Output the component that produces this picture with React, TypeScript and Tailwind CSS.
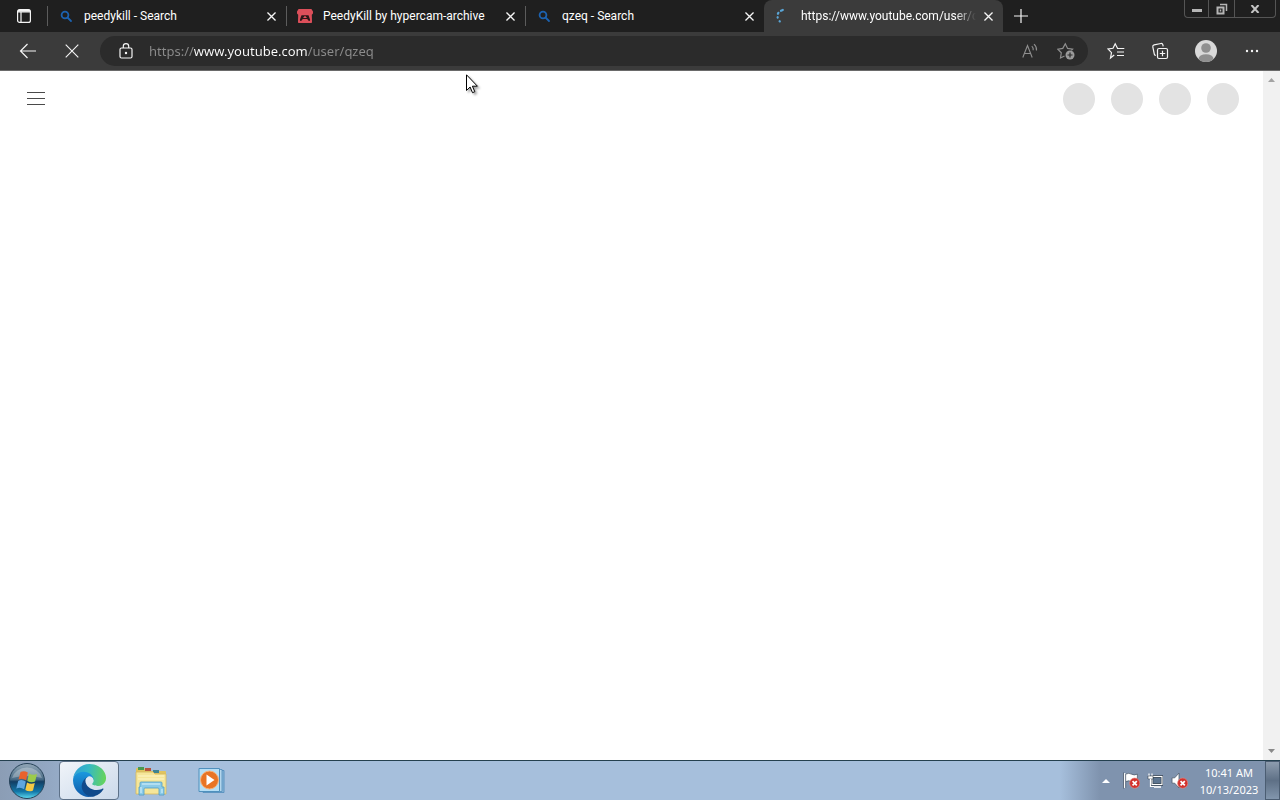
import React from 'react';

interface Tab {
  title: string;
  icon: 'search' | 'itch' | 'loading';
  active?: boolean;
}

const tabs: Tab[] = [
  { title: 'peedykill - Search', icon: 'search' },
  { title: 'PeedyKill by hypercam-archive', icon: 'itch' },
  { title: 'qzeq - Search', icon: 'search' },
  { title: 'https://www.youtube.com/user/qzeq', icon: 'loading', active: true }
];

const SearchIcon = () => (
  <svg width="14" height="14" viewBox="0 0 14 14" fill="none" stroke="#1c62b0" strokeWidth="1.8">
    <circle cx="6" cy="6" r="3.4" />
    <path d="M8.500 8.500 12 12" strokeLinecap="round" />
  </svg>
);

const ItchIcon = () => (
  <svg width="16" height="14" viewBox="0 0 16 14">
    <path
      d="M1.600 0h12.800L16 2.600v1.200c0 1-.6 1.600-1.200 1.900L15 13c0 .6-.4 1-1 1H2c-.6 0-1-.4-1-1l.2-7.300C.6 5.400 0 4.800 0 3.800V2.600z"
      fill="#dc4f5a"
    />
    <path
      d="M4.500 6.200h7l1.600 4.600c.2 1-.7 1.600-1.500.9L10.200 10H5.800l-1.400 1.700c-.8.7-1.700.1-1.500-.9z"
      fill="#2a1718"
    />
    <path d="M8 6.800 10 9H6z" fill="#dc4f5a" />
  </svg>
);

const LoadingIcon = () => (
  <svg width="16" height="16" viewBox="0 0 16 16" fill="none" stroke="#5aa5d6" strokeWidth="2.200" strokeLinecap="round">
    <path d="M7.800 2 6 2.800M3.400 4.800l-.5 1" />
    <path d="M2.600 9.200l.1.400" />
    <path d="M4.600 13.200l.2.200" />
  </svg>
);

const icons = { search: SearchIcon, itch: ItchIcon, loading: LoadingIcon };

const CloseIcon = ({ size = 9, width = 1.5 }: { size?: number; width?: number }) => (
  <svg width={size} height={size} viewBox="0 0 10 10" fill="none" stroke="#f5f5f5" strokeWidth={width}>
    <path d="M.5.5l9 9M9.500.500l-9 9" />
  </svg>
);

const BrowserTab: React.FC<{ tab: Tab }> = ({ tab }) => {
  const Icon = icons[tab.icon];

  return (
    <div
      className={`flex h-8 min-w-0 flex-1 items-center pr-[7px]
        ${tab.active ? 'rounded-t-lg bg-[#3b3b3b]' : ''}`}
    >
      <span className={`h-5 w-px shrink-0 ${tab.active ? '' : 'bg-[#5c5c5c]'}`} />
      <button
        role="tab"
        aria-selected={!!tab.active}
        className="ml-[9px] flex min-w-0 flex-1 items-center gap-[9px] text-left font-['Roboto','Noto_Sans',sans-serif] text-[12px] leading-4 text-white"
      >
        <span className="flex w-[18px] shrink-0 justify-center">
          <Icon />
        </span>
        <span
          className={`min-w-0 flex-1 overflow-hidden whitespace-nowrap
            ${tab.active ? '[mask-image:linear-gradient(to_right,#000_88%,transparent)]' : ''}`}
        >
          {tab.title}
        </span>
      </button>
      <button aria-label="Close tab" className="ml-1 flex size-4 shrink-0 items-center justify-center">
        <CloseIcon />
      </button>
    </div>
  );
};

const WindowControls = () => (
  <div className="mr-1 ml-auto flex h-[18px] shrink-0 self-start rounded-b-sm border border-t-0 border-[#555]">
    <button aria-label="Minimize" className="flex w-6 items-end justify-center border-r border-[#555] pb-[5px]">
      <span className="h-[3px] w-[10px] bg-[#b5b5b5]" />
    </button>
    <button aria-label="Restore" className="flex w-[26px] items-center justify-center border-r border-[#555]">
      <svg width="12" height="12" viewBox="0 0 12 12" fill="none" stroke="#b5b5b5">
        <path d="M4 1.500h6.500V8" strokeWidth="1.500" />
        <rect x="1.500" y="4.500" width="6" height="6" strokeWidth="2" />
        <path d="M4.500 6.500v2" strokeWidth="1.500" />
      </svg>
    </button>
    <button aria-label="Close" className="flex w-10 items-center justify-center">
      <svg width="10" height="8" viewBox="0 0 10 8" stroke="#c4c4c4" strokeWidth="2">
        <path d="M1.500 0l7 8M8.500 0l-7 8" />
      </svg>
    </button>
  </div>
);

const TabStrip = () => (
  <div className="flex h-8 items-center bg-[#1f1f1f]">
    <button aria-label="Tab actions" className="flex w-[47px] shrink-0 justify-center">
      <svg width="14" height="14" viewBox="0 0 14 14" fill="none" stroke="#f5f5f5" strokeWidth="1.200">
        <rect x=".6" y=".6" width="12.800" height="12.800" rx="2" />
        <path d="M.6 3h12.800M4 3v10.400" />
        <path d="M1 1.800h12" strokeWidth="2" />
      </svg>
    </button>
    <div role="tablist" className="flex max-w-[956px] min-w-0 flex-1">
      {tabs.map((tab) => (
        <BrowserTab key={tab.title} tab={tab} />
      ))}
    </div>
    <button aria-label="New tab" className="flex w-9 shrink-0 justify-center">
      <svg width="14" height="14" viewBox="0 0 14 14" stroke="#f5f5f5" strokeWidth="1.200">
        <path d="M7 0v14M0 7h14" />
      </svg>
    </button>
    <WindowControls />
  </div>
);

const Toolbar = () => (
  <div className="flex h-[39px] items-center border-b border-[#6a6a6a] bg-[#3b3b3b] px-[6px]">
    <button aria-label="Back" className="flex w-11 shrink-0 justify-center">
      <svg width="18" height="16" viewBox="0 0 18 16" fill="none" stroke="#f5f5f5" strokeWidth="1.200">
        <path d="M8.500 1 1.500 8l7 7M1.500 8H17" />
      </svg>
    </button>
    <button aria-label="Stop" className="mr-[6px] flex w-11 shrink-0 justify-center">
      <CloseIcon size={14} width={0.8} />
    </button>
    <div className="flex h-[30px] min-w-0 flex-1 items-center rounded-full bg-[#2b2b2b] pr-1 pl-2">
      <button aria-label="Site information" className="flex w-9 shrink-0 justify-center">
        <svg width="14" height="16" viewBox="0 0 14 16" fill="none" stroke="#f5f5f5" strokeWidth="1.200">
          <rect x="1" y="5" width="12" height="10" rx="1.500" />
          <path d="M4.300 5V3.300a2.700 2.700 0 0 1 5.400 0V5" />
          <circle cx="7" cy="10" r=".6" fill="#f5f5f5" />
        </svg>
      </button>
      <input
        type="text"
        aria-label="Address"
        defaultValue="https://www.youtube.com/user/qzeq"
        className="ml-[5px] min-w-0 flex-1 bg-[linear-gradient(to_right,#8c8c8c_45px,#fff_45px,#fff_159px,#8c8c8c_159px)] bg-clip-text text-[13px] leading-5 text-transparent outline-none"
      />
      <button aria-label="Read aloud" className="flex w-9 shrink-0 justify-center">
        <svg width="16" height="16" viewBox="0 0 16 16" fill="none" stroke="#8f8f8f" strokeWidth="1.100">
          <path d="M.8 14.500 5.500 2.500l4.700 12M2.500 10.500h6" />
          <path d="M9.800 3.200q1.700 1.600 1.400 4M12 1.200q3 2.800 2.500 6.300" />
        </svg>
      </button>
      <button aria-label="Add to favorites" className="flex w-9 shrink-0 justify-center">
        <svg width="18" height="18" viewBox="0 0 18 18" fill="none" stroke="#8f8f8f" strokeWidth="1.200">
          <path d="M7.500 14 3.500 16l.8-5.200L.8 7.200l5-.8L8.300 1.800l2.300 4.600 5 .8-1.200 1.200" />
          <circle cx="13" cy="13" r="4.500" fill="#9b9b9b" stroke="none" />
          <path d="M13 10.500v5M10.500 13h5" stroke="#2b2b2b" />
        </svg>
      </button>
    </div>
    <button aria-label="Favorites" className="ml-[6px] flex w-11 shrink-0 justify-center">
      <svg width="18" height="18" viewBox="0 0 18 18" fill="none" stroke="#f5f5f5" strokeWidth="1.200">
        <path d="M7.200 13 3.500 16l1-5.400L1 7l5-.7 2.200-4.500 2.300 4.400" />
        <path d="M10 6.500h7.300M10 10h7M10 13.500h7" />
      </svg>
    </button>
    <button aria-label="Collections" className="flex w-11 shrink-0 justify-center">
      <svg width="18" height="18" viewBox="0 0 18 18" fill="none" stroke="#f5f5f5" strokeWidth="1.200">
        <rect x="6.500" y="6.500" width="10" height="10" rx="1.500" />
        <path d="M11.500 8.800v5.400M8.800 11.500h5.400" />
        <path d="M4.800 13.500c-.8-.2-1.400-.6-1.500-1.300L1.800 4.800c-.2-1 .4-1.700 1.300-1.900L10 1.500c.8-.1 1.600.3 1.800 1.100l.4 1.800" />
      </svg>
    </button>
    <button aria-label="Profile" className="flex w-12 shrink-0 justify-center">
      <svg width="22" height="22" viewBox="0 0 22 22">
        <clipPath id="avatar">
          <circle cx="11" cy="11" r="11" />
        </clipPath>
        <g clipPath="url(#avatar)">
          <rect width="22" height="22" fill="#d9d9d9" />
          <circle cx="11" cy="8" r="4.800" fill="#8f8f8f" />
          <ellipse cx="11" cy="19" rx="7.500" ry="4.800" fill="#8f8f8f" />
        </g>
      </svg>
    </button>
    <button aria-label="Settings and more" className="flex w-11 shrink-0 justify-center">
      <svg width="14" height="4" viewBox="0 0 14 4" fill="#f5f5f5">
        <circle cx="2" cy="2" r="1.200" />
        <circle cx="7" cy="2" r="1.200" />
        <circle cx="12" cy="2" r="1.200" />
      </svg>
    </button>
  </div>
);

const Page = () => (
  <div className="flex min-h-0 flex-1 bg-white">
    <main className="flex-1">
      <header className="flex h-14 items-center justify-between pr-6 pl-4">
        <button aria-label="Guide" className="flex size-10 items-center justify-center">
          <svg width="18" height="14" viewBox="0 0 18 14" stroke="#4a4a4a">
            <path d="M0 .5h18M0 6.500h18M0 12.500h18" />
          </svg>
        </button>
        <div className="flex gap-4">
          {[0, 1, 2, 3].map((i) => (
            <span key={i} className="size-8 rounded-full bg-[#e3e3e3]" />
          ))}
        </div>
      </header>
    </main>
    <div className="flex w-[17px] shrink-0 flex-col items-center justify-between bg-[#f1f1f1] py-[7px]">
      <svg width="7" height="4" viewBox="0 0 7 4" fill="#a3a3a3">
        <path d="M0 4 3.500 0 7 4z" />
      </svg>
      <svg width="7" height="4" viewBox="0 0 7 4" fill="#8a8a8a">
        <path d="M0 0 3.500 4 7 0z" />
      </svg>
    </div>
  </div>
);

const StartOrb = () => (
  <svg width="38" height="38" viewBox="0 0 38 38">
    <defs>
      <linearGradient id="orb" x1="0" y1="0" x2="0" y2="1">
        <stop offset="0" stopColor="#93a8b8" />
        <stop offset=".45" stopColor="#4a6c86" />
        <stop offset=".52" stopColor="#123e63" />
        <stop offset=".8" stopColor="#1277a8" />
        <stop offset="1" stopColor="#5fdcf2" />
      </linearGradient>
    </defs>
    <circle cx="19" cy="19" r="17.500" fill="url(#orb)" stroke="#274359" />
    <path d="M4 16a15.500 14 0 0 1 30 0q-15-4-30 0z" fill="#fff" opacity=".28" />
    <path d="M12.500 10q3.500-2 7.300.6l-1.700 7.700q-3.600-2.600-7.600-.7z" fill="#e8622c" />
    <path d="M21 11.400q3.700 2.400 8 .6l-1.900 7.600q-3.900 1.800-7.800-.6z" fill="#9ccb4a" />
    <path d="M10.200 18.900q3.800-1.900 7.600.7l-1.700 7.700q-3.600-2.600-7.800-.8z" fill="#5fa6e0" />
    <path d="M19 20.400q3.900 2.400 7.800.6l-1.800 7.400q-4 1.900-7.700-.5z" fill="#f6c944" />
  </svg>
);

const EdgeIcon = () => (
  <svg width="33" height="33" viewBox="0 0 256 256">
    <defs>
      <linearGradient id="edgeTop" x1="0" y1=".4" x2="1" y2=".5">
        <stop offset="0" stopColor="#2f9fd6" />
        <stop offset=".45" stopColor="#35b9c4" />
        <stop offset="1" stopColor="#66d45a" />
      </linearGradient>
      <linearGradient id="edgeLeft" x1="0" y1="0" x2="0" y2="1">
        <stop offset="0" stopColor="#1b9de2" />
        <stop offset="1" stopColor="#1059a8" />
      </linearGradient>
    </defs>
    <path
      d="M231 190.500c-3.400 1.800-6.900 3.400-10.500 4.700a101.600 101.600 0 0 1-35.900 6.400c-47.300 0-88.500-32.500-88.500-74.300a31.500 31.500 0 0 1 16.400-27.300c-42.800 1.800-53.800 46.400-53.800 72.500 0 74 68.100 81.400 82.800 81.400 7.900 0 19.800-2.300 27-4.600l1.300-.4a128.300 128.300 0 0 0 66.600-52.800 4 4 0 0 0-5.400-5.600z"
      fill="#114a8b"
    />
    <path
      d="M105.700 241.400A79.200 79.200 0 0 1 83 220.100a80.700 80.700 0 0 1 29.500-120.200c3.200-1.500 8.500-4.100 15.600-4a32.400 32.400 0 0 1 25.700 13 31.900 31.900 0 0 1 6.300 18.700c0-.2 24.500-79.600-80-79.600-43.900 0-80 41.600-80 78.200a130.200 130.200 0 0 0 12.100 56 128 128 0 0 0 156.400 67 75.500 75.500 0 0 1-62.800-7.900z"
      fill="url(#edgeLeft)"
    />
    <path
      d="M152.300 148.900c-.9 1-3.400 2.500-3.400 5.600 0 2.600 1.700 5.200 4.800 7.300 14.400 10.100 41.700 8.700 41.800 8.700a59.600 59.600 0 0 0 30.300-8.300 61.400 61.400 0 0 0 30.400-52.900c.3-22.400-8-37.300-11.300-43.900C223.500 23.900 177.700 0 128 0A128 128 0 0 0 0 126.200c.5-36.500 36.800-66 80-66 3.500 0 23.500.3 42 10.100 16.300 8.600 24.900 19 30.800 29.200 6.200 10.700 7.300 24.100 7.300 29.500 0 5.300-2.700 13.300-7.800 19.900z"
      fill="url(#edgeTop)"
    />
  </svg>
);

const ExplorerIcon = () => (
  <svg width="32" height="30" viewBox="0 0 32 30">
    <path d="M1 3q0-1 1-1h7l2 3h19q1 0 1 1v21H1z" fill="#e0c460" />
    <path d="M3 1h6v3H3z" fill="#4a9a4f" />
    <path d="M10 2h6v3h-6z" fill="#b5533c" />
    <path d="M18 4h6v3h-6z" fill="#3f8490" />
    <path d="M1 6h17l2 2h11v20H1z" fill="#f5e69a" stroke="#d6b95e" strokeWidth=".8" />
    <path d="M3 10h26M3 13h26" stroke="#fdf6c8" strokeWidth="1" />
    <path d="M5 17q0-1 1-1h20q1 0 1 1v4h2v8h-5v-6q0-1-1-1H10q-1 0-1 1v6H4v-8h1z" fill="#8ccbe8" stroke="#4f9cc4" strokeWidth=".8" />
    <path d="M7 18h18M6 21v6M27 23v4" stroke="#d8f2fb" />
  </svg>
);

const MediaPlayerIcon = () => (
  <svg width="28" height="28" viewBox="0 0 28 28">
    <path d="M5 3.500h21v22H5z" fill="#8ab8da" stroke="#4f8cba" strokeWidth=".8" />
    <path d="M3 2.500h21v22H3z" fill="#b4d6ec" stroke="#4f8cba" strokeWidth=".8" />
    <path d="M1 1.500h20.500v23H1z" fill="#b5def5" stroke="#4f90bd" />
    <circle cx="11.500" cy="13" r="9" fill="#e87425" stroke="#f6b27a" />
    <path d="M8.500 7.500v11l8-5.500z" fill="#fff" />
  </svg>
);

const ErrorBadge = ({ cx, cy }: { cx: number; cy: number }) => (
  <g>
    <circle cx={cx} cy={cy} r="4.800" fill="#d2322d" stroke="#e98b82" strokeWidth=".6" />
    <path
      d={`M${cx - 2} ${cy - 2}l4 4M${cx + 2} ${cy - 2}l-4 4`}
      stroke="#fff"
      strokeWidth="1.600"
    />
  </g>
);

const Tray = () => (
  <div className="ml-auto flex h-full shrink-0 items-center">
    <button aria-label="Show hidden icons" className="mr-[3px] flex size-5 items-center justify-center">
      <svg width="8" height="4" viewBox="0 0 8 4" fill="#fff">
        <path d="M0 4 4 0l4 4z" />
      </svg>
    </button>
    <button aria-label="Action Center" className="flex w-6 justify-center">
      <svg width="17" height="17" viewBox="0 0 16 16">
        <path d="M1.500 1v14" stroke="#fff" strokeWidth="1.600" />
        <path d="M.5.500v15M2.500 9v6" stroke="#3a4757" strokeWidth=".6" />
        <path d="M2.500 2q3-1.500 5.500 0t5.500 0v7q-3 1.500-5.500 0t-5.500 0z" fill="#fff" stroke="#3a4757" strokeWidth=".6" />
        <ErrorBadge cx={11} cy={10.500} />
      </svg>
    </button>
    <button aria-label="Network" className="flex w-6 justify-center">
      <svg width="16" height="16" viewBox="0 0 16 16" fill="none">
        <rect x="5" y="3.500" width="10" height="8" fill="#5d7590" stroke="#222e3b" strokeWidth="2.400" />
        <rect x="5" y="3.500" width="10" height="8" stroke="#fff" strokeWidth="1.200" />
        <path d="M7 14h7" stroke="#fff" strokeWidth="1.600" />
        <path d="M2 .5v3M5 .5v3" stroke="#fff" strokeWidth="1.200" />
        <path d="M1 3h5v3H1z" fill="#fff" stroke="#222e3b" strokeWidth=".5" />
        <path d="M3.500 6v7.500H7" stroke="#fff" strokeWidth="1.200" />
      </svg>
    </button>
    <button aria-label="Volume" className="flex w-6 justify-center">
      <svg width="17" height="17" viewBox="0 0 16 16">
        <path d="M1 5.500h2.500L7.500 1v14l-4-4.500H1z" fill="#fff" stroke="#3a4757" strokeWidth=".6" />
        <ErrorBadge cx={11} cy={10.500} />
      </svg>
    </button>
    <button className="ml-2 w-[60px] text-center text-[11px] leading-[17px] whitespace-nowrap text-white">
      <time className="block">10:41 AM</time>
      <time className="block">10/13/2023</time>
    </button>
    <button
      aria-label="Show desktop"
      className="ml-[6px] h-full w-[15px] border border-[#4b5d72] bg-linear-to-b from-[#8d9cae] via-[#5e7086] to-[#8296ad]"
    />
  </div>
);

const Taskbar = () => (
  <footer className="flex h-10 shrink-0 items-center border-t border-[#24404f] bg-[linear-gradient(to_right,#8b9db5,#93a8c3_50px,#a6bfdc_120px,#a6bfdc_calc(100%-220px),#7f93ae_calc(100%-180px))]">
    <button aria-label="Start" className="ml-2 shrink-0">
      <StartOrb />
    </button>
    <button
      aria-label="Microsoft Edge"
      className="ml-[13px] flex h-full w-[60px] items-center justify-center rounded-sm border border-[#5d7188] bg-linear-to-br from-[#f0f4f9] to-[#cbd9ea]"
    >
      <EdgeIcon />
    </button>
    <button aria-label="Windows Explorer" className="flex w-16 justify-center">
      <ExplorerIcon />
    </button>
    <button aria-label="Windows Media Player" className="flex w-[58px] justify-center">
      <MediaPlayerIcon />
    </button>
    <Tray />
  </footer>
);

const Cursor = () => (
  <svg
    className="pointer-events-none absolute top-[74px] left-[466px] drop-shadow-[2px_2px_1px_rgba(0,0,0,0.35)]"
    width="13"
    height="20"
    viewBox="0 0 13 20"
  >
    <path d="M.5.800v15.700l3.600-3.500 2.400 5.700 2.300-1-2.400-5.500h5z" fill="#fff" stroke="#000" />
  </svg>
);

export default function App() {
  return (
    <div className="relative flex h-screen flex-col overflow-hidden font-['Noto_Sans','Open_Sans',sans-serif]">
      <TabStrip />
      <Toolbar />
      <Page />
      <Taskbar />
      <Cursor />
    </div>
  );
}
